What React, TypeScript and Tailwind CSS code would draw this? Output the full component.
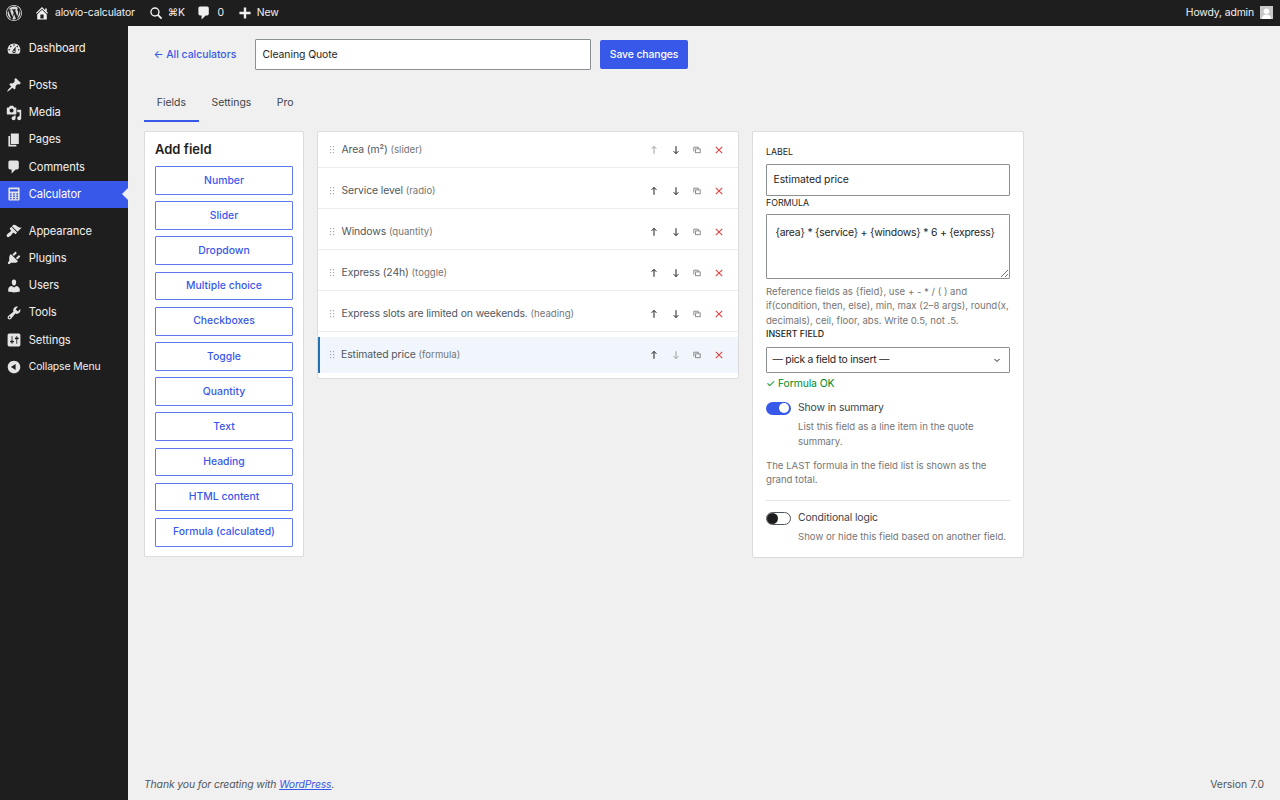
import type { ReactNode } from "react"

const D = {
  wp: "M20 10c0-5.52-4.48-10-10-10S0 4.48 0 10s4.48 10 10 10 10-4.48 10-10zM10 1.01c4.97 0 8.99 4.02 8.99 8.99s-4.02 8.99-8.99 8.99S1.01 14.97 1.01 10 5.03 1.01 10 1.01zM8.01 14.82L4.96 6.61c.49-.03 1.05-.08 1.05-.08.43-.05.38-1.01-.06-.99 0 0-1.29.1-2.13.1-.15 0-.33 0-.52-.01 1.44-2.17 3.9-3.6 6.7-3.6 2.09 0 3.99.79 5.41 2.09-.6-.08-1.45.35-1.45 1.42 0 .66.38 1.22.79 1.88.31.54.5 1.22.5 2.21 0 1.34-1.27 4.48-1.27 4.48l-2.71-7.5c.48-.03.75-.16.75-.16.43-.05.38-1.1-.05-1.08 0 0-1.3.11-2.14.11-.78 0-2.11-.11-2.11-.11-.43-.02-.48 1.06-.05 1.08l.84.08 1.12 3.04zm6.02 2.15L16.64 10s.67-1.69.39-3.81c.63 1.14.94 2.42.94 3.81 0 2.96-1.56 5.58-3.94 6.97zM2.68 6.77L6.5 17.25c-2.67-1.3-4.47-4.08-4.47-7.25 0-1.16.2-2.23.65-3.23zm7.45 4.53l2.29 6.25c-.75.27-1.57.42-2.42.42-.72 0-1.41-.11-2.06-.3z",
  home: "M16 8.5l1.53 1.53-1.06 1.06L10 4.62l-6.47 6.47-1.06-1.06L10 2.5l4 4v-2h2v4zm-6-2.46l6 5.99V18H4v-5.97zM12 17v-5H8v5h4z",
  dashboard: "M3.76 16h12.48c1.1-1.37 1.76-3.11 1.76-5 0-4.42-3.58-8-8-8s-8 3.58-8 8c0 1.89.66 3.63 1.76 5zM10 4c.55 0 1 .45 1 1s-.45 1-1 1-1-.45-1-1 .45-1 1-1zM6 6c.55 0 1 .45 1 1s-.45 1-1 1-1-.45-1-1 .45-1 1-1zm8 0c.55 0 1 .45 1 1s-.45 1-1 1-1-.45-1-1 .45-1 1-1zm-5.37 5.55L12 7v6c0 1.1-.9 2-2 2s-2-.9-2-2c0-.57.24-1.08.63-1.45zM4 10c.55 0 1 .45 1 1s-.45 1-1 1-1-.45-1-1 .45-1 1-1zm12 0c.55 0 1 .45 1 1s-.45 1-1 1-1-.45-1-1 .45-1 1-1zm-5 3c0-.55-.45-1-1-1s-1 .45-1 1 .45 1 1 1 1-.45 1-1z",
  post: "M10.44 3.02l1.82-1.82 6.36 6.35-1.83 1.82c-1.05-.68-2.48-.57-3.41.36l-.75.75c-.92.93-1.04 2.35-.35 3.41l-1.83 1.82-2.41-2.41-2.8 2.79c-.42.42-3.38 2.71-3.8 2.29s1.86-3.39 2.28-3.81l2.79-2.79L4.1 9.36l1.83-1.82c1.05.69 2.48.57 3.4-.36l.75-.75c.93-.92 1.05-2.35.36-3.41z",
  media: "M13 11V4c0-.55-.45-1-1-1h-1.67L9 1H5L3.67 3H2c-.55 0-1 .45-1 1v7c0 .55.45 1 1 1h10c.55 0 1-.45 1-1zM7 4.5c1.38 0 2.5 1.12 2.5 2.5S8.38 9.5 7 9.5 4.5 8.38 4.5 7 5.62 4.5 7 4.5zM14 6h5v10.5c0 1.38-1.12 2.5-2.5 2.5S14 17.88 14 16.5s1.12-2.5 2.5-2.5c.17 0 .34.02.5.05V9h-3V6zm-4 8.05V13h2v3.5c0 1.38-1.12 2.5-2.5 2.5S7 17.88 7 16.5 8.12 14 9.5 14c.17 0 .34.02.5.05z",
  page: "M6 15V2h10v13H6zm-1 1h8v2H3V5h2v11z",
  comment: "M5 2h9c1.1 0 2 .9 2 2v7c0 1.1-.9 2-2 2h-2l-5 5v-5H5c-1.1 0-2-.9-2-2V4c0-1.1.9-2 2-2z",
  calculator: "M4 2h12a1 1 0 0 1 1 1v14a1 1 0 0 1-1 1H4a1 1 0 0 1-1-1V3a1 1 0 0 1 1-1zm1 2v3h10V4H5zm0 5v2h2V9H5zm4 0v2h2V9H9zm4 0v2h2V9h-2zm-8 3v2h2v-2H5zm4 0v2h2v-2H9zm4 0v2h2v-2h-2zm-8 3v1.5h2V15H5zm4 0v1.5h2V15H9zm4 0v1.5h2V15h-2z",
  appearance: "M14.48 11.06L7.41 3.99l1.5-1.5c.5-.56 2.3-.47 3.51.32 1.21.8 1.43 1.28 2.91 2.1 1.18.64 2.45 1.26 4.45.85zm-.71.71L6.7 4.7 4.93 6.47c-.39.39-.39 1.02 0 1.41l1.06 1.06c.39.39.39 1.03 0 1.42-.6.6-1.43 1.11-2.21 1.69-.35.26-.7.53-1.01.84C1.43 13.71.05 16 1.27 17.23c1.22 1.23 3.52-.16 4.88-1.52.31-.31.58-.66.84-1.01.58-.78 1.09-1.61 1.69-2.21.39-.39 1.02-.39 1.41 0l1.06 1.06c.39.39 1.02.39 1.41 0z",
  plugins: "M13.11 4.36L9.87 7.6 8 5.73l3.24-3.24c.35-.34 1.05-.2 1.56.32.52.51.66 1.21.31 1.55zm-8 1.77l.91-1.12 9.01 9.01-1.19.84c-.71.71-2.63 1.16-3.82 1.16H6.14L4.9 17.26c-.59.59-1.54.59-2.12 0-.59-.58-.59-1.53 0-2.12l1.24-1.24v-3.88c0-1.13.4-3.19 1.09-3.89zm7.26 3.97l3.24-3.24c.34-.35 1.04-.21 1.55.31.52.51.66 1.21.31 1.55l-3.24 3.25z",
  users: "M10 9.25c-2.27 0-2.73-3.44-2.73-3.44C7 4.02 7.82 2 9.97 2c2.16 0 2.98 2.02 2.71 3.81 0 0-.41 3.44-2.68 3.44zm0 2.57L12.72 10c2.39 0 4.52 2.33 4.52 4.53v2.49s-3.65 1.13-7.24 1.13c-3.65 0-7.24-1.13-7.24-1.13v-2.49c0-2.25 1.94-4.48 4.47-4.48z",
  tools: "M16.68 9.77c-1.34 1.34-3.3 1.67-4.95.99l-5.41 6.52c-.99.99-2.59.99-3.58 0s-.99-2.59 0-3.57l6.52-5.42c-.68-1.65-.35-3.61.99-4.95 1.28-1.28 3.12-1.62 4.72-1.06l-2.89 2.89 2.82 2.82 2.86-2.87c.53 1.58.18 3.39-1.08 4.65zM3.81 16.21c.4.39 1.04.39 1.43 0 .4-.4.4-1.04 0-1.43-.39-.4-1.03-.4-1.43 0-.39.39-.39 1.03 0 1.43z",
  settings: "M18 16V4c0-1.1-.9-2-2-2H4c-1.1 0-2 .9-2 2v12c0 1.1.9 2 2 2h12c1.1 0 2-.9 2-2zM8 11h1c.55 0 1 .45 1 1s-.45 1-1 1H8v1.5c0 .28-.22.5-.5.5s-.5-.22-.5-.5V13H6c-.55 0-1-.45-1-1s.45-1 1-1h1V5.5c0-.28.22-.5.5-.5s.5.22.5.5V11zm5-2h-1c-.55 0-1-.45-1-1s.45-1 1-1h1V5.5c0-.28.22-.5.5-.5s.5.22.5.5V7h1c.55 0 1 .45 1 1s-.45 1-1 1h-1v5.5c0 .28-.22.5-.5.5s-.5-.22-.5-.5V9z",
  collapse: "M10 2.16c4.33 0 7.84 3.51 7.84 7.84s-3.51 7.84-7.84 7.84S2.16 14.33 2.16 10 5.71 2.16 10 2.16zm2 11.72V6.12L6.18 9.97z",
}

function Dash({ d, className = "w-4 h-4" }: { d: string; className?: string }) {
  return (
    <svg viewBox="0 0 20 20" fill="currentColor" fillRule="evenodd" className={className}>
      <path d={d} />
    </svg>
  )
}

const menuGroups = [
  [{ label: "Dashboard", icon: D.dashboard }],
  [
    { label: "Posts", icon: D.post },
    { label: "Media", icon: D.media },
    { label: "Pages", icon: D.page },
    { label: "Comments", icon: D.comment },
    { label: "Calculator", icon: D.calculator, active: true },
  ],
  [
    { label: "Appearance", icon: D.appearance },
    { label: "Plugins", icon: D.plugins },
    { label: "Users", icon: D.users },
    { label: "Tools", icon: D.tools },
    { label: "Settings", icon: D.settings },
  ],
]

const addButtons = ["Number", "Slider", "Dropdown", "Multiple choice", "Checkboxes", "Toggle", "Quantity", "Text", "Heading", "HTML content", "Formula (calculated)"]

const fields = [
  { label: "Area (m²)", type: "slider", upOff: true },
  { label: "Service level", type: "radio" },
  { label: "Windows", type: "quantity" },
  { label: "Express (24h)", type: "toggle" },
  { label: "Express slots are limited on weekends.", type: "heading" },
  { label: "Estimated price", type: "formula", selected: true, downOff: true },
]

function BarItem({ children, className = "" }: { children: ReactNode; className?: string }) {
  return <div className={"flex items-center text-[#f0f0f0] " + className}>{children}</div>
}

function AdminBar() {
  return (
    <div className="h-[26px] shrink-0 bg-[#1e1e1e] flex items-center text-[10.4px] tracking-[-0.13px] text-[#f0f0f0]">
      <div className="w-[28px] flex justify-center shrink-0">
        <Dash d={D.wp} className="w-4 h-4 text-[#d8d8d8]" />
      </div>
      <BarItem className="ml-[6px] gap-[5px]">
        <Dash d={D.home} className="w-4 h-4" />
        <span>alovio-calculator</span>
      </BarItem>
      <BarItem className="ml-[14px] gap-[5px]">
        <svg viewBox="0 0 20 20" fill="none" stroke="currentColor" className="w-[14px] h-[14px]">
          <circle cx="8.5" cy="8.5" r="5.7" strokeWidth="2" />
          <path d="M12.5 12.5 L18 18" strokeWidth="2.6" />
        </svg>
        <span>⌘K</span>
      </BarItem>
      <BarItem className="ml-[11px] gap-[5.5px]">
        <Dash d={D.comment} className="w-4 h-4" />
        <span>0</span>
      </BarItem>
      <BarItem className="ml-[13px] gap-[4px]">
        <svg viewBox="0 0 20 20" stroke="currentColor" strokeWidth="3" className="w-4 h-4">
          <path d="M10 3v14M3 10h14" />
        </svg>
        <span>New</span>
      </BarItem>
      <div className="ml-auto mr-[7px] flex items-center gap-[6px]">
        <span>Howdy, admin</span>
        <div className="w-[13px] h-[13px] bg-[#c8c8c8] flex items-end justify-center overflow-hidden">
          <svg viewBox="0 0 20 20" fill="#fff" className="w-[13px] h-[13px]">
            <circle cx="10" cy="8" r="4.2" />
            <path d="M3 20c0-5 3-7 7-7s7 2 7 7z" />
          </svg>
        </div>
      </div>
    </div>
  )
}

function Sidebar() {
  return (
    <div className="w-[128px] shrink-0 bg-[#1e1e1e] pt-[9px] text-[11.2px] tracking-[-0.12px] text-[#f0f0f0]">
      {menuGroups.map((group, i) => (
        <div key={i} className="mb-[9.5px]">
          {group.map((item) => (
            <div
              key={item.label}
              className={"relative h-[27.25px] flex items-center pl-[6.4px] " + (item.active ? "bg-[#3858e9] text-white" : "")}
            >
              <Dash d={item.icon} className="w-4 h-4 shrink-0 text-[#e4e4e4]" />
              <span className="ml-[6.4px]">{item.label}</span>
              {item.active && (
                <span className="absolute right-0 top-1/2 -translate-y-1/2 border-y-[6.4px] border-r-[6.4px] border-y-transparent border-r-[#f0f0f0]" />
              )}
            </div>
          ))}
        </div>
      ))}
      <div className="h-[27px] -mt-[9.5px] flex items-center pl-[6.4px] text-[10.4px]">
        <Dash d={D.collapse} className="w-4 h-4 shrink-0 text-[#e4e4e4]" />
        <span className="ml-[6.4px]">Collapse Menu</span>
      </div>
    </div>
  )
}

function AddFieldCard() {
  return (
    <div className="w-[160px] shrink-0 self-start h-[426px] bg-white border border-[#dcdcde] rounded-[2px] px-[10px]">
      <h2 className="mt-[8px] h-[18px] leading-[18px] text-[13px] font-semibold text-[#1e1e1e]">Add field</h2>
      <div className="mt-[8px] flex flex-col gap-[6.4px]">
        {addButtons.map((label) => (
          <button key={label} className="h-[28.8px] border border-[#5f79ee] rounded-[1px] text-[10.4px] font-medium text-[#3858e9] bg-white">
            {label}
          </button>
        ))}
      </div>
    </div>
  )
}

function FieldRow({ field, last }: { field: (typeof fields)[number]; last: boolean }) {
  return (
    <div
      className={
        "relative h-[36px] flex items-center pr-[13.5px] " +
        (last ? "" : "border-b border-[#ececec] ") +
        (field.selected ? "bg-[#f0f6fc] border-l-[2.4px] border-l-[#2271b1] pl-[9.6px]" : "pl-[12px]")
      }
    >
      <svg viewBox="0 0 5 8" fill="#a7aaad" className="w-[5px] h-[8px] shrink-0">
        <rect x="0" y="0" width="1.2" height="1.2" />
        <rect x="3" y="0" width="1.2" height="1.2" />
        <rect x="0" y="3" width="1.2" height="1.2" />
        <rect x="3" y="3" width="1.2" height="1.2" />
        <rect x="0" y="6" width="1.2" height="1.2" />
        <rect x="3" y="6" width="1.2" height="1.2" />
      </svg>
      <span className="ml-[6.5px] text-[10.4px] tracking-[-0.1px] text-[#50575e]">
        {field.label} <span className="text-[9.6px] tracking-normal text-[#757575]">({field.type})</span>
      </span>
      <div className="ml-auto flex items-center gap-[9.5px]">
        <svg viewBox="0 0 12 12" fill="none" stroke={field.upOff ? "#a0a0a0" : "#1e1e1e"} strokeWidth="1" className="w-3 h-3">
          <path d="M6 9.8V2.4M3.6 4.8L6 2.4l2.4 2.4" />
        </svg>
        <svg viewBox="0 0 12 12" fill="none" stroke={field.downOff ? "#a0a0a0" : "#1e1e1e"} strokeWidth="1" className="w-3 h-3">
          <path d="M6 2.2v7.4M3.6 7.2L6 9.6l2.4-2.4" />
        </svg>
        <svg viewBox="0 0 12 12" fill="none" stroke="#808080" strokeWidth="0.9" className="w-3 h-3">
          <path d="M2.8 7.5V3.2h4.5v1.6" />
          <rect x="4.6" y="4.9" width="4.6" height="3.8" />
        </svg>
        <svg viewBox="0 0 12 12" fill="none" stroke="#e04444" strokeWidth="1.1" className="w-3 h-3">
          <path d="M2.8 2.8l6.4 6.4M9.2 2.8l-6.4 6.4" />
        </svg>
      </div>
    </div>
  )
}

function Toggle({ on }: { on: boolean }) {
  return (
    <span
      className={
        "w-[25px] h-[13px] shrink-0 rounded-full flex items-center " +
        (on ? "bg-[#3858e9] justify-end pr-[2px]" : "bg-white border-[0.8px] border-[#50575e]")
      }
    >
      <span className={on ? "w-[9.6px] h-[9.6px] rounded-full bg-white" : "w-[11px] h-[11px] rounded-full bg-[#1e1e1e]"} />
    </span>
  )
}

function Inspector() {
  return (
    <div className="w-[272px] shrink-0 self-start h-[427px] bg-white border border-[#dcdcde] rounded-[2px] px-[13px] text-[10.4px]">
      <div className="mt-[14px] h-[11px] leading-[11px] text-[8.8px] text-[#1e1e1e] uppercase">Label</div>
      <div className="mt-[6.5px] h-[32px] border border-[#8c8f94] rounded-[1px] flex items-center px-[6.5px] pt-[1px] tracking-[-0.06px] text-[#1e1e1e]">Estimated price</div>
      <div className="mt-[1px] h-[11px] leading-[11px] text-[8.8px] text-[#1e1e1e] uppercase">Formula</div>
      <div className="relative mt-[6px] h-[65px] border border-[#8c8f94] rounded-[1px] pl-[8.5px] pt-[11px] leading-[14px] whitespace-nowrap tracking-[-0.21px] text-[#1e1e1e]">
        {"{area} * {service} + {windows} * 6 + {express}"}
        <svg viewBox="0 0 8 8" stroke="#555" strokeWidth="0.8" className="absolute right-[1px] bottom-[1px] w-2 h-2">
          <path d="M1 8L8 1M5 8l3-3" />
        </svg>
      </div>
      <p className="mt-[6.5px] text-[9.6px] leading-[14.4px] text-[#757575]">
        {"Reference fields as {field}, use + - * / ( ) and if(condition, then, else), min, max (2–8 args), round(x, decimals), ceil, floor, abs. Write 0.5, not .5."}
      </p>
      <div className="h-[11px] leading-[11px] text-[8.8px] font-medium text-[#1e1e1e] uppercase">Insert field</div>
      <div className="mt-[8px] h-[26px] border border-[#8c8f94] rounded-[1px] flex items-center pl-[5.5px] pr-[8px] text-[#1e1e1e]">
        <span className="tracking-[-0.25px]">— pick a field to insert —</span>
        <svg viewBox="0 0 8 8" fill="none" stroke="#1e1e1e" strokeWidth="1" className="ml-auto w-2 h-2">
          <path d="M1.5 3l2.5 2.5L6.5 3" />
        </svg>
      </div>
      <div className="mt-[3.5px] h-[14px] leading-[14px] tracking-[-0.1px] text-[#008a20]">✓ Formula OK</div>
      <div className="mt-[11px] flex items-center gap-[7px] h-[13px]">
        <Toggle on />
        <span className="tracking-[-0.12px] text-[#3c434a]">Show in summary</span>
      </div>
      <p className="mt-[4px] ml-[32px] text-[9.6px] leading-[15px] text-[#757575]">List this field as a line item in the quote summary.</p>
      <p className="mt-[10px] text-[9.6px] leading-[14.4px] text-[#757575]">The LAST formula in the field list is shown as the grand total.</p>
      <div className="mt-[12px] border-t border-[#e4e4e4]" />
      <div className="mt-[11px] flex items-center gap-[7px] h-[13px]">
        <Toggle on={false} />
        <span className="tracking-[-0.12px] text-[#3c434a]">Conditional logic</span>
      </div>
      <p className="mt-[4px] ml-[32px] text-[9.6px] leading-[15px] text-[#757575]">Show or hide this field based on another field.</p>
    </div>
  )
}

export default function App() {
  return (
    <div className="h-screen flex flex-col overflow-hidden font-[family-name:Inter,sans-serif] bg-[#f0f0f0]">
      <AdminBar />
      <div className="flex-1 flex min-h-0">
        <Sidebar />
        <div className="flex-1 flex flex-col pl-[16px] pr-[16px]">
          <div className="mt-[13px] h-[31px] flex items-center">
            <a className="ml-[9.5px] w-[101.5px] shrink-0 text-[10.4px] font-medium text-[#3858e9]">← All calculators</a>
            <div className="w-[336px] h-[31px] bg-white border border-[#8c8f94] rounded-[1px] flex items-center px-[6.5px] text-[10.4px] tracking-[-0.06px] text-[#1e1e1e]">Cleaning Quote</div>
            <button className="ml-[9px] w-[88px] h-[29px] bg-[#3858e9] rounded-[2px] text-[10.4px] font-medium tracking-[-0.1px] text-white">Save changes</button>
          </div>
          <div className="mt-[19px] flex text-[10.4px] text-[#3c434a]">
            <div className="h-[33px] px-[12.8px] pt-[6px] border-b-[2px] border-[#3858e9]">Fields</div>
            <div className="h-[33px] px-[12.8px] pt-[6px]">Settings</div>
            <div className="h-[33px] px-[12.8px] pt-[6px]">Pro</div>
          </div>
          <div className="mt-[9px] flex items-start gap-[13px]">
            <AddFieldCard />
            <div className="w-[422px] shrink-0 bg-white border border-[#dcdcde] rounded-[2px] pb-[5px] flex flex-col gap-[5px]">
              {fields.map((f, i) => (
                <FieldRow key={f.label} field={f} last={i === fields.length - 1} />
              ))}
            </div>
            <Inspector />
          </div>
          <div className="mt-auto mb-[7px] flex justify-between text-[10.4px] text-[#50575e]">
            <span className="italic tracking-[-0.12px]">Thank you for creating with <a className="text-[#3858e9] underline">WordPress</a>.</span>
            <span>Version 7.0</span>
          </div>
        </div>
      </div>
    </div>
  )
}
